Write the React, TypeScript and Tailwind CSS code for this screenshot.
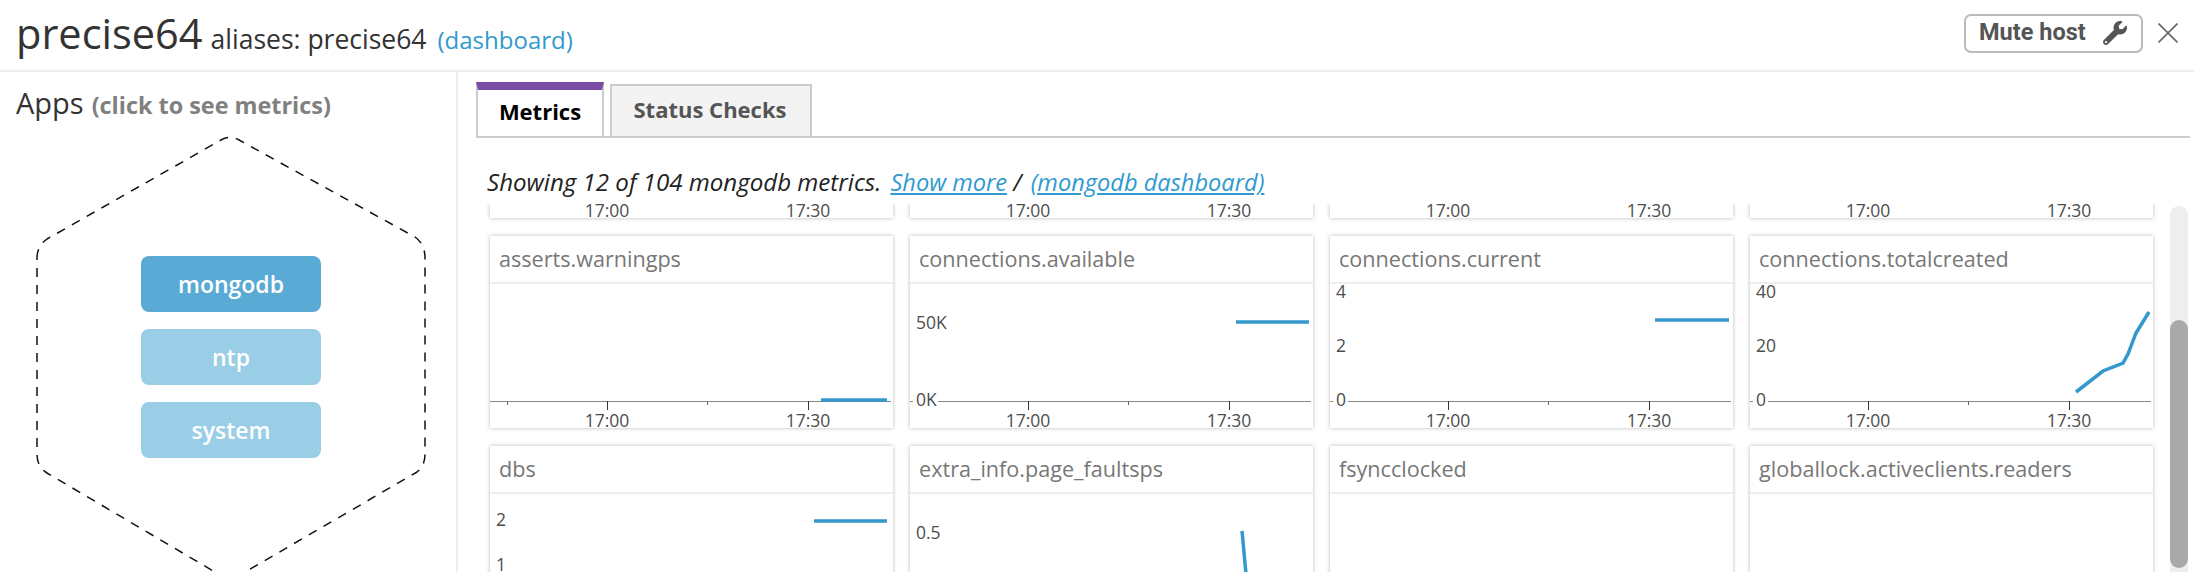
import React from "react";
import { FaWrench } from "react-icons/fa";

type Chart = {
  title: string;
  ticks: [number, number];
  minors: number[];
  axisFrom: number;
  stub?: boolean;
  ylabels: { t: string; y: number }[];
  line?: string;
};

const topTicks: [number, number][] = [[117, 318], [118, 319], [118, 319], [118, 319]];

const row1: Chart[] = [
  { title: "asserts.warningps", ticks: [117, 318], minors: [17, 217], axisFrom: 0, ylabels: [], line: "331,116 397,116" },
  { title: "connections.available", ticks: [118, 319], minors: [218], axisFrom: 28, stub: true, ylabels: [{ t: "50K", y: 39 }, { t: "0K", y: 116 }], line: "326,38 399,38" },
  { title: "connections.current", ticks: [118, 319], minors: [218], axisFrom: 18, stub: true, ylabels: [{ t: "4", y: 8 }, { t: "2", y: 62 }, { t: "0", y: 116 }], line: "325,36 399,36" },
  { title: "connections.totalcreated", ticks: [118, 319], minors: [218], axisFrom: 18, stub: true, ylabels: [{ t: "40", y: 8 }, { t: "20", y: 62 }, { t: "0", y: 116 }], line: "326,108 353,87 373,79 378,70 386,49 399,28" },
];

const row2: Chart[] = [
  { title: "dbs", ticks: [117, 318], minors: [], axisFrom: 0, ylabels: [{ t: "2", y: 26 }, { t: "1", y: 71 }], line: "324,27 397,27" },
  { title: "extra_info.page_faultsps", ticks: [118, 319], minors: [], axisFrom: 0, ylabels: [{ t: "0.5", y: 39 }], line: "332,37 336,80" },
  { title: "fsyncclocked", ticks: [118, 319], minors: [], axisFrom: 0, ylabels: [] },
  { title: "globallock.activeclients.readers", ticks: [118, 319], minors: [], axisFrom: 0, ylabels: [] },
];

function AxisText({ x, y, children, anchor = "middle" }: { x: number; y: number; children: string; anchor?: "middle" | "start" }) {
  return (
    <text x={x} y={y} textAnchor={anchor} fontSize={17.5} fill="#4d4d4d" fontFamily="'Open Sans', sans-serif">
      {children}
    </text>
  );
}

function ChartCard({ c, showAxis }: { c: Chart; showAxis: boolean }) {
  return (
    <div className="bg-white shadow-[0_0_4px_rgba(0,0,0,0.28)] h-[192px]">
      <div className="h-[48px] border-b-2 border-[#eeeeee] pl-[9px] pt-[1px] flex items-center text-[21.6px] text-[#777777]">{c.title}</div>
      <svg className="block w-[403px] h-[144px]" viewBox="0 0 403 144">
        {showAxis && (
          <g>
            {c.stub && <line x1={0} x2={3} y1={117.5} y2={117.5} stroke="#888" />}
            <line x1={c.axisFrom} x2={401} y1={117.5} y2={117.5} stroke="#888" />
            {c.ticks.map((t) => (
              <line key={t} x1={t + 0.5} x2={t + 0.5} y1={117} y2={126} stroke="#333" />
            ))}
            {c.minors.map((t) => (
              <line key={t} x1={t + 0.5} x2={t + 0.5} y1={117} y2={121} stroke="#666" />
            ))}
            <AxisText x={c.ticks[0]} y={143}>17:00</AxisText>
            <AxisText x={c.ticks[1]} y={143}>17:30</AxisText>
          </g>
        )}
        {c.ylabels.map((l) => (
          <AxisText key={l.t} x={6} y={l.y + 6} anchor="start">{l.t}</AxisText>
        ))}
        {c.line && <polyline points={c.line} fill="none" stroke="#3398cc" strokeWidth={3.5} />}
      </svg>
    </div>
  );
}

export default function App() {
  return (
    <div className="w-[2194px] h-[572px] overflow-hidden bg-white font-['Open_Sans',sans-serif] flex flex-col">
      <header className="h-[72px] shrink-0 border-b-2 border-[#eeeeee] flex items-center pl-[16px] pr-[16px]">
        <div className="flex items-baseline text-[#333333] -mt-[2px]">
          <span className="text-[41.5px] leading-none">precise64</span>
          <span className="text-[26.5px] leading-none ml-[8px]">aliases: precise64</span>
          <a className="text-[24px] leading-none ml-[11px] text-[#2e9ad0]">(dashboard)</a>
        </div>
        <button className="ml-auto w-[179px] h-[39px] -mt-[4px] border-2 border-[#bbbbbb] rounded-[7px] flex items-center pl-[13px] text-[23.5px] font-bold text-[#555555] font-['Roboto',sans-serif]">
          <span>Mute host</span>
          <FaWrench className="w-[24px] h-[24px] ml-[17px] text-[#555555]" />
        </button>
        <svg className="ml-[15px] w-[20px] h-[20px] -mt-[4px]" viewBox="0 0 20 20">
          <path d="M0.5 0.5 L19.5 19.5 M19.5 0.5 L0.5 19.5" stroke="#666" strokeWidth={1.6} fill="none" />
        </svg>
      </header>

      <div className="flex flex-1 min-h-0">
        <aside className="relative w-[458px] shrink-0 border-r-2 border-[#eeeeee] overflow-hidden">
          <svg className="absolute left-0 top-0 w-[456px] h-[500px]" viewBox="0 72 456 500">
            <path
              d="M37 258 Q37 246 47 239 L221 140 Q230 135 239 140 L415 237 Q425 244 425 258 L425 454 Q425 466 417 472 L240 575 Q230 581 220 575 L47 473 Q37 467 37 454 Z"
              fill="none"
              stroke="#111"
              strokeWidth={1.5}
              strokeDasharray="9 8"
            />
          </svg>
          <div className="relative pl-[16px] pt-[11px] h-[184px] flex items-start text-[#333333]">
            <div className="flex items-baseline">
              <span className="text-[29px] leading-[40px]">Apps</span>
              <span className="text-[23.4px] leading-[40px] font-bold text-[#808080] ml-[8px]">(click to see metrics)</span>
            </div>
          </div>
          <div className="relative ml-[141px] w-[180px] flex flex-col gap-[17px] text-white text-[23px] font-semibold">
            <div className="h-[56px] rounded-[8px] bg-[#5aaad6] flex items-center justify-center">mongodb</div>
            <div className="h-[56px] rounded-[8px] bg-[#9acde6] flex items-center justify-center">ntp</div>
            <div className="h-[56px] rounded-[8px] bg-[#9acde6] flex items-center justify-center">system</div>
          </div>
        </aside>

        <main className="flex-1 min-w-0 flex flex-col">
          <div className="mt-[10px] ml-[18px] mr-[4px] h-[56px] shrink-0 border-b-2 border-[#cccccc] flex items-stretch">
            <div className="w-[128px] border-t-8 border-x-2 border-t-[#7a4ca3] border-x-[#cccccc] bg-white flex items-center justify-center pb-[3px] text-[22px] font-bold text-black">
              Metrics
            </div>
            <div className="ml-[6px] mt-[2px] w-[202px] border-t-2 border-x-2 border-[#cccccc] bg-[#f3f3f3] flex items-center justify-center pb-[3px] pr-[2px] text-[22px] font-bold text-[#555555]">
              Status Checks
            </div>
          </div>

          <p className="ml-[29px] mt-[30px] h-[36px] shrink-0 text-[23.6px] leading-[28px] italic text-[#222222]">
            <span className="text-[24.1px]">Showing 12 of 104 mongodb metrics.</span> <a className="ml-[3px] underline text-[#2e9ad0]">Show more</a> / <a className="ml-[3px] underline text-[#2e9ad0]">(mongodb dashboard)</a>
          </p>

          <div className="flex-1 min-h-0 flex overflow-hidden">
            <div className="ml-[26px] w-[1676px] overflow-hidden pl-[6px]">
              <div className="grid grid-cols-[repeat(4,403px)] gap-x-[17px] gap-y-[18px]">
                {topTicks.map((t, i) => (
                  <div key={i} className="h-[14px] bg-white shadow-[0_0_4px_rgba(0,0,0,0.28)]">
                    <svg className="block w-[403px] h-[14px]" viewBox="0 0 403 14">
                      <AxisText x={t[0]} y={13}>17:00</AxisText>
                      <AxisText x={t[1]} y={13}>17:30</AxisText>
                    </svg>
                  </div>
                ))}
                {row1.map((c) => (
                  <ChartCard key={c.title} c={c} showAxis />
                ))}
                {row2.map((c) => (
                  <ChartCard key={c.title} c={c} showAxis={false} />
                ))}
              </div>
            </div>
            <div className="ml-[10px] w-[18px] h-full mt-[2px] rounded-t-[9px] bg-[#eeeeee] shrink-0">
              <div className="mt-[114px] h-[248px] rounded-[9px] bg-[#a9a9a9]" />
            </div>
          </div>
        </main>
      </div>
    </div>
  );
}
